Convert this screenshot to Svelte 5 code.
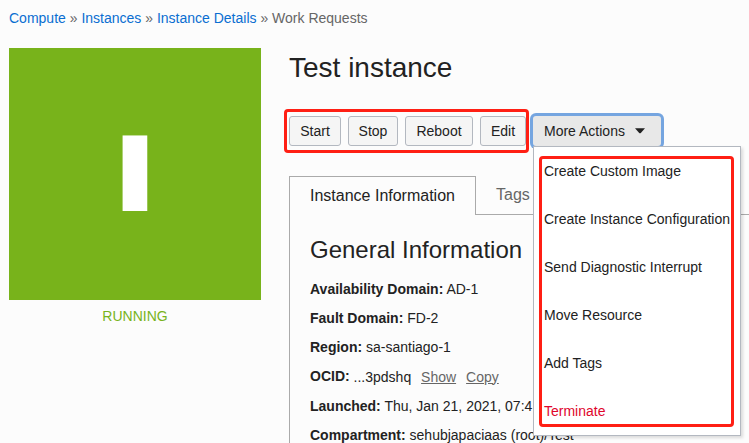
<script>
  const crumbs = ['Compute', 'Instances', 'Instance Details'];
  const actions = [
    { label: 'Start', width: 52 },
    { label: 'Stop', width: 50 },
    { label: 'Reboot', width: 68 },
    { label: 'Edit', width: 46 }
  ];
  const menu = ['Create Custom Image', 'Create Instance Configuration', 'Send Diagnostic Interrupt', 'Move Resource', 'Add Tags', 'Terminate'];
  const details = [
    ['Availability Domain', 'AD-1'],
    ['Fault Domain', 'FD-2'],
    ['Region', 'sa-santiago-1'],
    ['OCID', '...3pdshq'],
    ['Launched', 'Thu, Jan 21, 2021, 07:4'],
    ['Compartment', 'sehubjapaciaas (root)/Test']
  ];
</script>

<div class="page">
  <nav class="crumbs">
    {#each crumbs as crumb}<a href="#top">{crumb}</a><span>{' » '}</span>{/each}<span>Work Requests</span>
  </nav>
  <div class="columns">
    <aside>
      <div class="tile"><span>I</span></div>
      <div class="status">RUNNING</div>
    </aside>
    <main>
      <h1>Test instance</h1>
      <div class="toolbar">
        <div class="group">
          {#each actions as action}
            <button style:width="{action.width}px">{action.label}</button>
          {/each}
          <div class="mark"></div>
        </div>
        <div class="more">
          <button class="open">More Actions
            <svg width="10" height="6" viewBox="0 0 10 6"><path d="M0 .3h10L5.8 4.9q-.8.7-1.6 0z" fill="#222" /></svg>
          </button>
          <div class="menu">
            {#each menu as item}
              <div class="item" class:danger={item === 'Terminate'}>{item}</div>
            {/each}
            <div class="mark"></div>
          </div>
        </div>
      </div>
      <div class="tabs">
        <div class="tab active">Instance Information</div>
        <div class="tab">Tags</div>
      </div>
      <section>
        <h2>General Information</h2>
        {#each details as [name, value]}
          <div class="row">
            <b class:raised={name === 'OCID'}>{name}:</b>
            <span>{value}</span>
            {#if name === 'OCID'}<a href="#show">Show</a><a href="#copy">Copy</a>{/if}
          </div>
        {/each}
      </section>
    </main>
  </div>
</div>

<style>
  :global(body) { background: #fcfcfc; overflow: hidden; }
  .page {
    box-sizing: border-box;
    width: 749px;
    height: 443px;
    overflow: hidden;
    padding: 8px 0 0 9px;
    background: #fcfcfc;
    color: #222;
    font: 14px/20px "Liberation Sans", Arial, sans-serif;
  }
  .crumbs { height: 40px; color: #666; white-space: pre; }
  .crumbs a { color: #0a6ed1; text-decoration: none; }
  .columns { display: flex; gap: 28px; }
  aside { flex: 0 0 252px; }
  .tile {
    display: flex;
    align-items: center;
    justify-content: center;
    height: 252px;
    background: #78b31b;
  }
  .tile span { color: #fff; font-size: 110px; line-height: 1; font-weight: bold; transform: translate(-.3px, -1px) scaleX(1.55); }
  .status { margin-top: 6px; text-align: center; color: #78b31b; }
  main { flex: 0 0 460px; min-width: 0; }
  h1, h2 { margin: 0; font-weight: normal; }
  h1 { height: 68px; font-size: 28px; line-height: 39px; }
  .toolbar { display: flex; gap: 7px; height: 60px; }
  .group { position: relative; display: flex; gap: 7px; height: 30px; }
  button {
    box-sizing: border-box;
    height: 30px;
    padding: 0;
    border: 1px solid #b3b8c0;
    border-radius: 3px;
    background: #f5f5f5;
    color: #222;
    font: inherit;
  }
  .mark { position: absolute; border: 3px solid #ff1f14; border-radius: 4px; pointer-events: none; }
  .group .mark { inset: -7px -3px -7px -5px; }
  .more { position: relative; }
  .open {
    display: flex;
    align-items: center;
    gap: 10px;
    width: 128px;
    padding-left: 11px;
    border: 0;
    background: #e8e8e8;
    box-shadow: 0 0 0 3px #75a5e0;
  }
  .menu {
    position: absolute;
    z-index: 2;
    top: 30px;
    left: 0;
    box-sizing: border-box;
    width: 208px;
    height: 290px;
    border: 1px solid #b3b8c0;
    background: #fff;
    box-shadow: 2px 2px 3px #0002;
  }
  .item { height: 48px; padding-left: 10px; line-height: 48px; white-space: nowrap; }
  .danger { color: #e0062d; }
  .menu .mark { top: 9px; left: 5px; width: 189px; height: 265px; }
  .tabs { display: flex; height: 38px; border-bottom: 1px solid #aaa; }
  .tab { padding: 0 20px; color: #666; font-size: 16px; line-height: 37px; }
  .active {
    box-sizing: border-box;
    width: 187px;
    height: 39px;
    border: 1px solid #aaa;
    border-bottom: 0;
    background: #fcfcfc;
    color: #222;
    white-space: nowrap;
  }
  section { padding: 18px 0 0 20px; border-left: 1px solid #aaa; }
  h2 { height: 46px; font-size: 24px; line-height: 34px; }
  .row { height: 29.2px; white-space: nowrap; }
  .raised { display: inline-block; transform: translateY(-1px); }
  .row a { margin-left: 6px; color: #666; }
  .row a + a { margin-left: 10px; }
</style>
